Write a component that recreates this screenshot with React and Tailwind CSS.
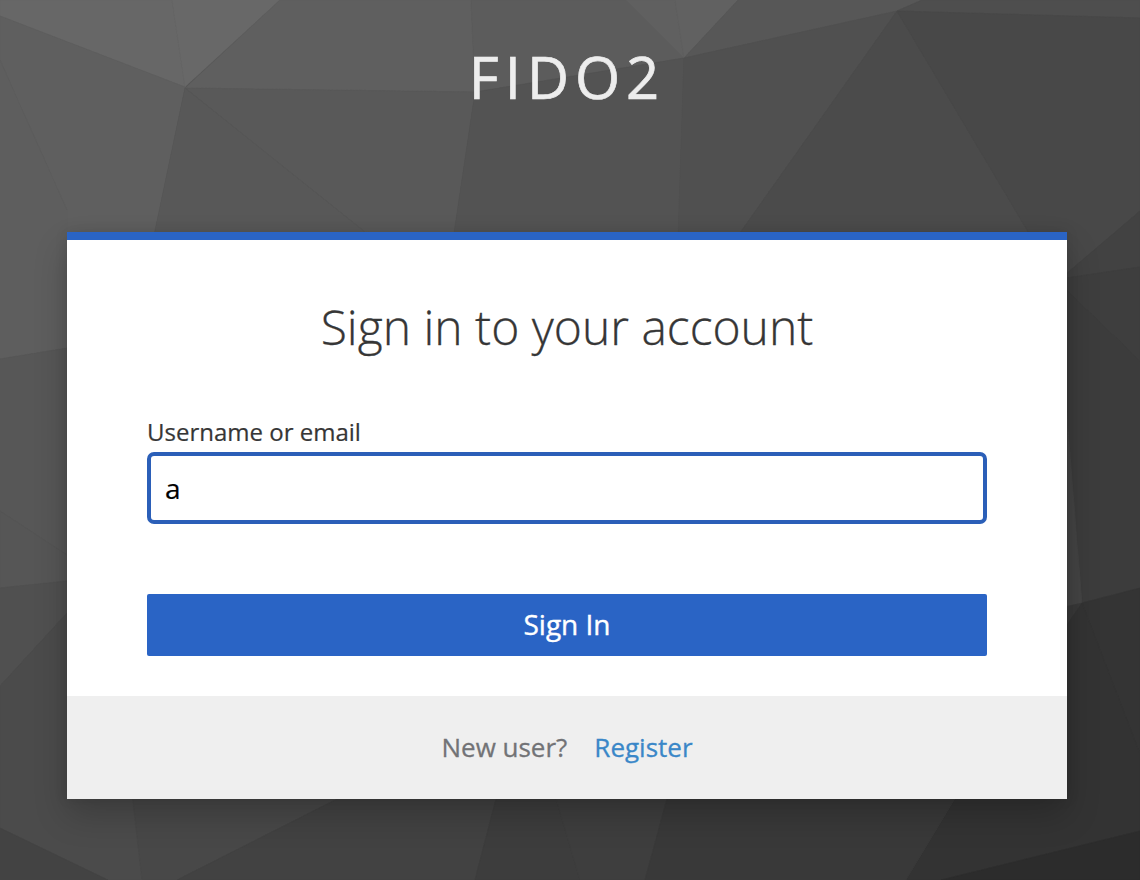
const facets = [
  ['0,0 172,0 185,87 0,16', '#676767'],
  ['172,0 280,0 185,87', '#686868'],
  ['280,0 471,0 475,92 185,88', '#5f5f5f'],
  ['471,0 626,0 684,58 475,92', '#5c5c5c'],
  ['626,0 675,0 684,58', '#606060'],
  ['675,0 738,0 684,58', '#616161'],
  ['738,0 922,0 897,11 684,58', '#575757'],
  ['922,0 1140,0 1140,18 897,11', '#4e4e4e'],
  ['0,16 185,87 153,240 67,348 67,210 0,60', '#5f5f5f'],
  ['0,60 67,210 67,348 0,359', '#5e5e5e'],
  ['185,88 475,92 453,240 365,232', '#595959'],
  ['185,88 365,232 365,240 153,240', '#585858'],
  ['475,92 684,58 678,240 453,240', '#535353'],
  ['684,58 897,11 735,240 678,240', '#505050'],
  ['897,11 1033,240 735,240', '#4b4b4b'],
  ['897,11 1140,18 1140,211 1060,280 1033,240', '#484848'],
  ['1140,211 1140,267 1060,279', '#424242'],
  ['1140,267 1140,361 1060,284 1060,279', '#3e3e3e'],
  ['1060,284 1140,361 1140,588 1082,603 1060,350', '#3c3c3c'],
  ['1060,330 1082,603 1060,608', '#444444'],
  ['1082,603 1060,635 1060,608', '#393939'],
  ['1082,603 1140,588 1140,754', '#343434'],
  ['1082,603 1140,754 1140,831 941,880 906,880 955,799 1060,780 1060,635', '#333333'],
  ['1140,831 1140,880 941,880', '#2c2c2c'],
  ['0,359 67,348 67,555 0,511', '#575757'],
  ['0,511 67,555 67,581 0,588', '#565656'],
  ['0,588 67,581 67,613 0,686', '#505050'],
  ['0,686 67,613 132,795 142,880 108,880 0,828', '#4b4b4b'],
  ['0,828 108,880 0,880', '#434343'],
  ['132,790 345,795 177,880 142,880', '#484848'],
  ['345,795 497,795 475,880 177,880', '#424242'],
  ['497,795 555,795 580,880 475,880', '#3d3d3d'],
  ['555,795 668,795 645,880 580,880', '#3e3e3e'],
  ['668,795 957,795 906,880 645,880', '#393939'],
]

function Backdrop() {
  return (
    <svg className="absolute inset-0 h-[880px] w-[1140px]" viewBox="0 0 1140 880" aria-hidden="true">
      {facets.map(([points, color]) => (
        <polygon key={points} points={points} fill={color} stroke={color} strokeWidth="0.6" />
      ))}
    </svg>
  )
}

export default function App() {
  return (
    <div className="relative h-[880px] w-[1140px] overflow-hidden bg-[#444444] font-['Open_Sans',sans-serif]">
      <Backdrop />
      <div className="relative flex flex-col pl-[67px]">
        <header className="flex h-[232px] w-[1000px] justify-center pt-[37px]">
          <div className="h-[80px] text-[58px] leading-[80px] tracking-[6px] text-[#ededed] uppercase [-webkit-text-stroke:0.7px_#ededed]">FIDO2</div>
        </header>
        <main className="flex h-[567px] w-[1000px] flex-col border-t-8 border-[#2a64c5] bg-white shadow-[0_16px_32px_rgba(3,3,3,0.2),0_0_12px_rgba(3,3,3,0.1)]">
          <h1 className="mt-[55px] text-center text-[48px] leading-[64px] font-light text-[#363636] [-webkit-text-stroke:0.3px_#363636]">Sign in to your account</h1>
          <form className="mt-[55px] flex flex-col px-20" onSubmit={(e) => e.preventDefault()}>
            <label htmlFor="username" className="h-[38px] text-[24px] leading-[36px] text-[#363636] [-webkit-text-stroke:0.2px_#363636]">Username or email</label>
            <input
              id="username"
              defaultValue="a"
              className="h-[72px] rounded-[7px] border-4 border-[#2b5fb8] bg-white px-[14px] text-[28px] text-black outline-none [-webkit-text-stroke:0.2px_#000]"
            />
            <button className="mt-[70px] h-[62px] rounded-[2px] bg-[#2a64c5] pb-[2px] text-[28px] leading-[60px] text-white [-webkit-text-stroke:0.4px_#fff]">Sign In</button>
          </form>
          <footer className="mt-auto flex h-[103px] items-center justify-center gap-[27px] bg-[#efefef] text-[26px] text-[#727376]">
            <span className="[-webkit-text-stroke:0.3px_#727376]">New user?</span>
            <a href="#register" className="text-[#3a87c8] [-webkit-text-stroke:0.3px_#3a87c8]">Register</a>
          </footer>
        </main>
      </div>
    </div>
  )
}
